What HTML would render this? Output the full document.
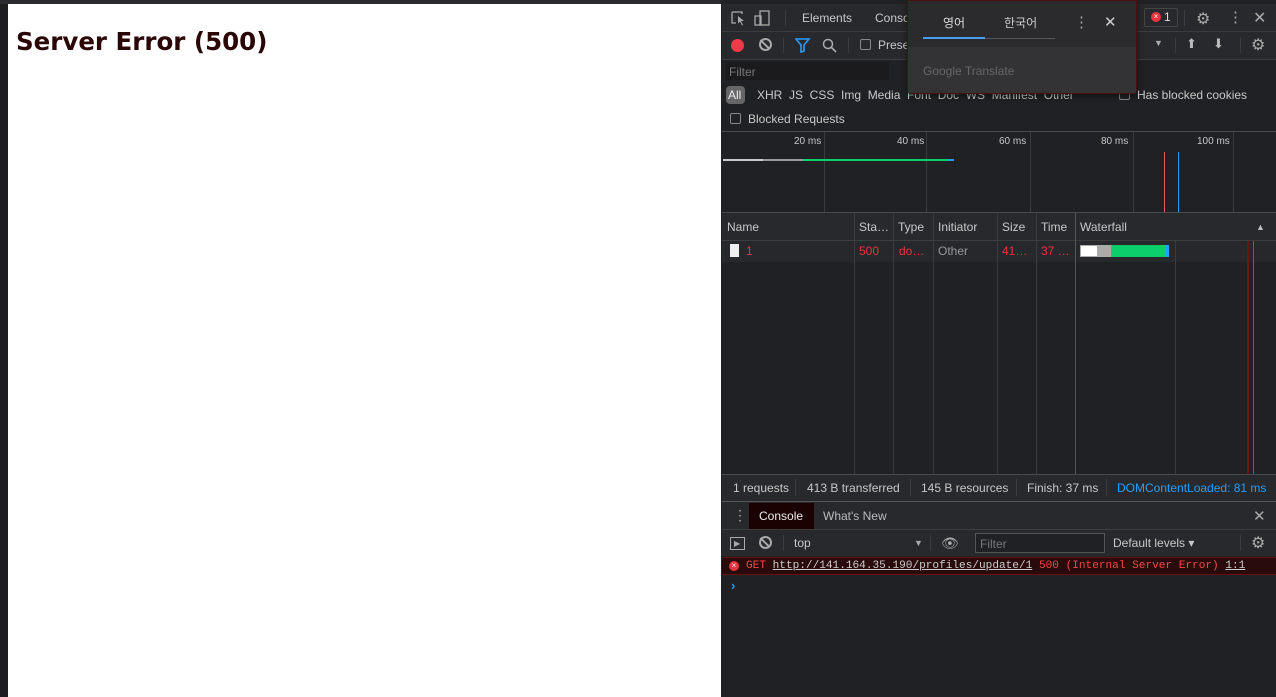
<!DOCTYPE html>
<html><head><meta charset="utf-8"><style>
*{box-sizing:border-box;margin:0;padding:0}
body{width:1276px;height:697px;overflow:hidden;background:#242426;font-family:"Liberation Sans",sans-serif;position:relative}
.a{position:absolute}
.t{font-size:12px;color:#c8c8c8;white-space:nowrap}
.vl{position:absolute;width:1px;background:#3c3c3c}
.hl{position:absolute;height:1px;background:#3c3c3c}
.cb{position:absolute;width:11px;height:11px;border:1px solid #888;border-radius:2px}
</style></head><body>
<!-- page -->
<div class="a" style="left:0;top:0;width:722px;height:4px;background:#2c2c2e"></div>
<div class="a" style="left:0;top:4px;width:8px;height:693px;background:#1e1e20"></div>
<div class="a" style="left:8px;top:4px;width:713px;height:693px;background:#fff"></div>
<div class="a" style="left:16px;top:27px;font-family:'DejaVu Sans',sans-serif;font-weight:bold;font-size:24.5px;color:#2a0606;white-space:nowrap">Server Error (500)</div>

<!-- devtools -->
<div class="a" style="left:721px;top:0;width:555px;height:697px;background:#202124"></div>
<div class="a" style="left:722px;top:4px;width:554px;height:27px;background:#28292c"></div>
<div class="hl" style="left:722px;top:31px;width:554px"></div>
<svg class="a" style="left:730px;top:10px" width="40" height="18"><path d="M2 2h10v2M2 2v11h4" stroke="#aaa" fill="none" stroke-width="1.3"/><path d="M8 6l6 5-3 0 2 4-1 .5-2-4-2 2z" fill="#aaa"/><rect x="30" y="1" width="9" height="14" stroke="#aaa" fill="none" stroke-width="1.3"/><rect x="25" y="6" width="6" height="9" stroke="#aaa" fill="none" stroke-width="1.3"/></svg>
<div class="vl" style="left:785px;top:10px;height:16px"></div>
<div class="a t" style="left:802px;top:11px">Elements</div>
<div class="a t" style="left:875px;top:11px">Conso</div>
<div class="a" style="left:1144px;top:8px;width:34px;height:19px;border:1px solid #444;border-radius:2px"></div>
<div class="a" style="left:1151px;top:12px;width:10px;height:10px;border-radius:50%;background:#e8343f;color:#fff;font-size:8px;text-align:center;line-height:10px">×</div>
<div class="a t" style="left:1164px;top:10px;color:#ddd">1</div>
<div class="vl" style="left:1184px;top:10px;height:16px"></div>
<div class="a" style="left:1196px;top:9px;font-size:16px;color:#aaa">⚙</div>
<div class="a" style="left:1228px;top:8px;font-size:15px;color:#aaa">⋮</div>
<div class="a" style="left:1253px;top:8px;font-size:16px;color:#aaa">✕</div>

<div class="a" style="left:722px;top:32px;width:554px;height:27px;background:#28292c"></div>
<div class="hl" style="left:722px;top:59px;width:554px"></div>
<div class="a" style="left:731px;top:39px;width:13px;height:13px;border-radius:50%;background:#f03a4a"></div>
<div class="a" style="left:759px;top:38px;width:13px;height:13px;border-radius:50%;border:2px solid #aaa"></div>
<div class="a" style="left:764px;top:38px;width:2px;height:13px;background:#aaa;transform:rotate(-45deg)"></div>
<div class="vl" style="left:783px;top:37px;height:16px"></div>
<svg class="a" style="left:795px;top:38px" width="60" height="16"><path d="M1 1h13l-5 6v6l-3 1v-7z" stroke="#2e9cf4" stroke-width="1.6" fill="none"/><circle cx="33" cy="6" r="4.5" stroke="#aaa" stroke-width="1.5" fill="none"/><path d="M36 9l5 5" stroke="#aaa" stroke-width="1.6"/></svg>
<div class="vl" style="left:848px;top:37px;height:16px"></div>
<div class="cb" style="left:860px;top:39px"></div>
<div class="a t" style="left:878px;top:38px">Prese</div>
<div class="a" style="left:1154px;top:38px;font-size:9px;color:#aaa">▼</div>
<div class="vl" style="left:1175px;top:37px;height:16px"></div>
<div class="a" style="left:1186px;top:36px;font-size:13px;color:#bbb">⬆</div>
<div class="a" style="left:1213px;top:36px;font-size:13px;color:#bbb">⬇</div>
<div class="vl" style="left:1240px;top:37px;height:16px"></div>
<div class="a" style="left:1251px;top:35px;font-size:16px;color:#aaa">⚙</div>

<div class="a" style="left:726px;top:62px;width:163px;height:18px;background:#1b1b1d"></div>
<div class="a t" style="left:729px;top:65px;color:#777">Filter</div>
<div class="a" style="left:726px;top:86px;width:19px;height:18px;border-radius:4px;background:#666"></div>
<div class="a t" style="left:728px;top:88px;color:#eee">All</div>
<div class="a t" style="left:757px;top:88px">XHR&nbsp;&nbsp;JS&nbsp;&nbsp;CSS&nbsp;&nbsp;Img&nbsp;&nbsp;Media&nbsp;&nbsp;Font&nbsp;&nbsp;Doc&nbsp;&nbsp;WS&nbsp;&nbsp;Manifest&nbsp;&nbsp;Other</div>
<div class="cb" style="left:1119px;top:89px"></div>
<div class="a t" style="left:1137px;top:88px">Has blocked cookies</div>
<div class="cb" style="left:730px;top:113px"></div>
<div class="a t" style="left:748px;top:112px">Blocked Requests</div>
<div class="hl" style="left:722px;top:131px;width:554px;background:#4a4a4a"></div>

<!-- overview -->
<div class="vl" style="left:824px;top:132px;height:80px"></div>
<div class="vl" style="left:926px;top:132px;height:80px"></div>
<div class="vl" style="left:1030px;top:132px;height:80px"></div>
<div class="vl" style="left:1133px;top:132px;height:80px"></div>
<div class="vl" style="left:1233px;top:132px;height:80px"></div>
<div class="a t" style="left:794px;top:136px;font-size:10px">20 ms</div>
<div class="a t" style="left:897px;top:136px;font-size:10px">40 ms</div>
<div class="a t" style="left:999px;top:136px;font-size:10px">60 ms</div>
<div class="a t" style="left:1101px;top:136px;font-size:10px">80 ms</div>
<div class="a t" style="left:1197px;top:136px;font-size:10px">100 ms</div>
<div class="a" style="left:723px;top:159px;width:40px;height:2px;background:#c8ccd0"></div>
<div class="a" style="left:763px;top:159px;width:40px;height:2px;background:#9a9a9a"></div>
<div class="a" style="left:803px;top:159px;width:145px;height:2px;background:#0cce6b"></div>
<div class="a" style="left:948px;top:159px;width:6px;height:2px;background:#2a9df4"></div>
<div class="a" style="left:1164px;top:152px;width:1px;height:60px;background:#f05a5a"></div>
<div class="a" style="left:1178px;top:152px;width:1px;height:60px;background:#2a9df4"></div>
<div class="hl" style="left:722px;top:212px;width:554px;background:#4a4a4a"></div>

<!-- table -->
<div class="a" style="left:722px;top:213px;width:554px;height:27px;background:#28292c"></div>
<div class="hl" style="left:722px;top:240px;width:554px"></div>
<div class="a" style="left:722px;top:241px;width:554px;height:21px;background:#27282b"></div>
<div class="vl" style="left:854px;top:213px;height:261px"></div>
<div class="vl" style="left:893px;top:213px;height:261px"></div>
<div class="vl" style="left:933px;top:213px;height:261px"></div>
<div class="vl" style="left:997px;top:213px;height:261px"></div>
<div class="vl" style="left:1036px;top:213px;height:261px"></div>
<div class="vl" style="left:1075px;top:213px;height:261px;background:#555"></div>
<div class="vl" style="left:1175px;top:241px;height:233px"></div>
<div class="a t" style="left:727px;top:220px">Name</div>
<div class="a t" style="left:859px;top:220px">Sta…</div>
<div class="a t" style="left:898px;top:220px">Type</div>
<div class="a t" style="left:938px;top:220px">Initiator</div>
<div class="a t" style="left:1002px;top:220px">Size</div>
<div class="a t" style="left:1041px;top:220px">Time</div>
<div class="a t" style="left:1080px;top:220px">Waterfall</div>
<div class="a" style="left:1256px;top:222px;font-size:9px;color:#bbb">▲</div>
<div class="a" style="left:730px;top:244px;width:9px;height:13px;background:#eee"></div>
<div class="a t" style="left:746px;top:244px;color:#e8343f">1</div>
<div class="a t" style="left:859px;top:244px;color:#e8343f">500</div>
<div class="a t" style="left:899px;top:244px;color:#e8343f">do…</div>
<div class="a t" style="left:938px;top:244px;color:#999">Other</div>
<div class="a t" style="left:1002px;top:244px;color:#e8343f">41…</div>
<div class="a t" style="left:1041px;top:244px;color:#e8343f">37 …</div>
<div class="a" style="left:1080px;top:245px;width:31px;height:12px;background:#aaa"></div>
<div class="a" style="left:1081px;top:246px;width:16px;height:10px;background:#fff"></div>
<div class="a" style="left:1111px;top:245px;width:55px;height:12px;background:#0cce6b"></div>
<div class="a" style="left:1166px;top:245px;width:3px;height:12px;background:#2a9df4"></div>
<div class="a" style="left:1247px;top:241px;width:2px;height:233px;background:#6b1515"></div>
<div class="a" style="left:1253px;top:241px;width:1px;height:233px;background:#2a6fb0"></div>

<!-- status -->
<div class="hl" style="left:722px;top:474px;width:554px;background:#4a4a4a"></div>
<div class="a" style="left:722px;top:475px;width:554px;height:26px;background:#28292c"></div>
<div class="a t" style="left:733px;top:481px">1 requests</div>
<div class="vl" style="left:795px;top:479px;height:17px"></div>
<div class="a t" style="left:807px;top:481px">413 B transferred</div>
<div class="vl" style="left:910px;top:479px;height:17px"></div>
<div class="a t" style="left:921px;top:481px">145 B resources</div>
<div class="vl" style="left:1016px;top:479px;height:17px"></div>
<div class="a t" style="left:1027px;top:481px">Finish: 37 ms</div>
<div class="vl" style="left:1106px;top:479px;height:17px"></div>
<div class="a t" style="left:1117px;top:481px;color:#2a9df4">DOMContentLoaded: 81 ms</div>

<!-- drawer -->
<div class="hl" style="left:722px;top:501px;width:554px;background:#555"></div>
<div class="a" style="left:722px;top:502px;width:554px;height:27px;background:#28292c"></div>
<div class="a" style="left:733px;top:507px;font-size:14px;color:#aaa">⋮</div>
<div class="a" style="left:749px;top:503px;width:65px;height:26px;background:#1a0202"></div>
<div class="a t" style="left:759px;top:509px;color:#eee">Console</div>
<div class="a t" style="left:823px;top:509px;color:#bbb">What's New</div>
<div class="a" style="left:1253px;top:507px;font-size:15px;color:#aaa">✕</div>
<div class="hl" style="left:722px;top:529px;width:554px"></div>
<div class="a" style="left:722px;top:530px;width:554px;height:26px;background:#28292c"></div>
<div class="a" style="left:730px;top:537px;width:15px;height:13px;border:1.5px solid #aaa"></div>
<div class="a" style="left:734px;top:539px;font-size:8px;color:#aaa">▶</div>
<div class="a" style="left:759px;top:536px;width:13px;height:13px;border-radius:50%;border:2px solid #aaa"></div>
<div class="a" style="left:764px;top:536px;width:2px;height:13px;background:#aaa;transform:rotate(-45deg)"></div>
<div class="vl" style="left:783px;top:535px;height:16px"></div>
<div class="a t" style="left:794px;top:536px">top</div>
<div class="a" style="left:914px;top:538px;font-size:9px;color:#aaa">▼</div>
<div class="vl" style="left:930px;top:535px;height:16px"></div>
<div class="a" style="left:941px;top:535px;font-size:14px;color:#aaa">👁</div>
<div class="a" style="left:975px;top:533px;width:130px;height:20px;border:1px solid #555;background:#202124"></div>
<div class="a t" style="left:980px;top:537px;color:#777">Filter</div>
<div class="a t" style="left:1113px;top:536px">Default levels ▾</div>
<div class="vl" style="left:1240px;top:535px;height:16px"></div>
<div class="a" style="left:1251px;top:533px;font-size:16px;color:#aaa">⚙</div>
<div class="a" style="left:722px;top:557px;width:554px;height:18px;background:#2a0b0b;border-top:1px solid #6b1010;border-bottom:1px solid #6b1010"></div>
<div class="a" style="left:729px;top:561px;width:10px;height:10px;border-radius:50%;background:#e8343f;color:#fff;font-size:8px;text-align:center;line-height:10px">×</div>
<div class="a" style="left:746px;top:560px;font-family:'Liberation Mono',monospace;font-size:11.1px;color:#f04848;white-space:nowrap">GET <span style="color:#ccc;text-decoration:underline">http://141.164.35.190/profiles/update/1</span> 500 (Internal Server Error)  <span style="color:#ccc;text-decoration:underline">1:1</span></div>
<div class="a" style="left:731px;top:578px;font-size:13px;font-weight:bold;color:#2a9df4">›</div>

<!-- translate popup -->
<div class="a" style="left:907px;top:0;width:230px;height:94px;background:#2b2b2d;border:1px solid #4a1010;border-radius:0 0 4px 4px;box-shadow:0 2px 6px rgba(0,0,0,.5)"></div>
<div class="a" style="left:908px;top:47px;width:228px;height:46px;background:#333335"></div>
<div class="a" style="left:943px;top:14px;font-family:'Liberation Sans','Noto Sans CJK KR',sans-serif;font-size:12px;color:#ddd">영어</div>
<div class="a" style="left:1004px;top:14px;font-family:'Liberation Sans','Noto Sans CJK KR',sans-serif;font-size:12px;color:#ccc">한국어</div>
<div class="a" style="left:923px;top:37px;width:62px;height:2px;background:#4a9df4"></div>
<div class="a" style="left:985px;top:38px;width:70px;height:1px;background:#555"></div>
<div class="a" style="left:1074px;top:13px;font-size:15px;color:#aaa">⋮</div>
<div class="a" style="left:1104px;top:13px;font-size:15px;color:#ccc">✕</div>
<div class="a" style="left:923px;top:64px;font-size:12px;color:#666">Google Translate</div>
</body></html>
